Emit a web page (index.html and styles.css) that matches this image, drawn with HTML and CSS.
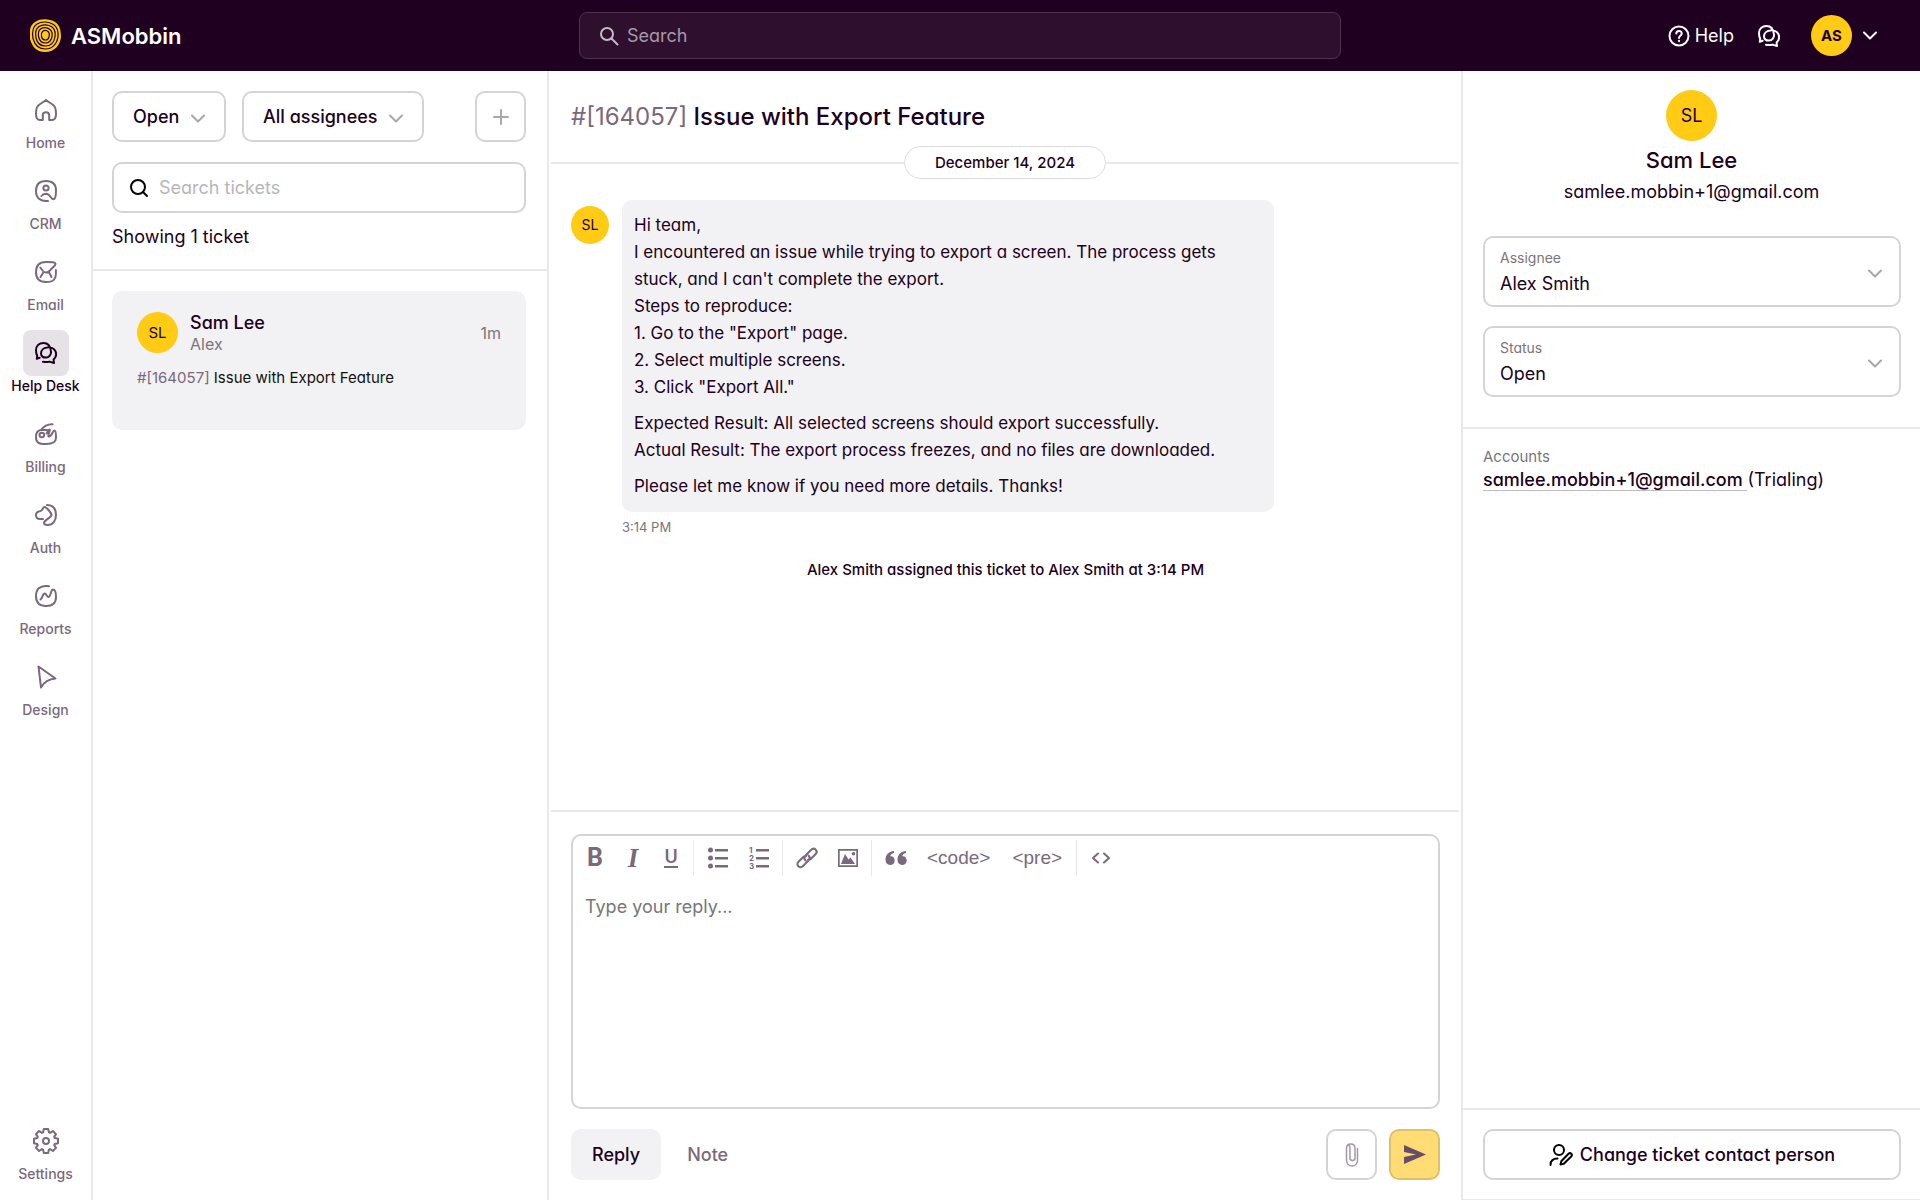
FILE: index.html
```html
<!DOCTYPE html>
<html lang="en">

<head>
  <title>ASMobbin - Help Desk</title>
  <meta charset="UTF-8">
  <meta name="viewport" content="width=device-width, initial-scale=1.0">
  <link rel="stylesheet" href="styles.css">
</head>

<body>

<!-- shared icons -->
<svg class="sprite" aria-hidden="true">
  <symbol id="chat" viewBox="0 0 22 22">
    <path d="M8 19.8C10.500 20.300 12.500 20.200 14.500 19.600L19 21L18.600 17.500C21.200 15 21.600 11.500 20.200 8.800C18.700 6.300 15 5 12 5.500C8.500 6 6 8.500 6 11.500C6 14.200 8.300 15.800 11 15.600C14.200 15.300 16.300 12.500 16 9.500C15.500 4.500 13 1 8.500 1C4 1 1 4 1 8.500C1 10.500 1.300 12.200 2.200 13.600L1.800 16.800L4.600 15.800"/>
  </symbol>
  <symbol id="chevron" viewBox="0 0 14 9">
    <path d="M1 1.500L7 7.500L13 1.500"/>
  </symbol>
</svg>

<header class="topbar">
  <a class="brand" href="#">
    <svg width="31" height="33" viewBox="0 0 31 33">
      <path fill="#ffc91a" d="M5 3C11-1 20 0 25 3C30 6 31 12 31 18C30 26 25 33 15 33C6 33 2 27 0 20C-1 12 0 6 5 3Z"/>
      <g fill="none" stroke="#200020" stroke-width="1.200">
        <path d="M7 5C12 2 19 2.500 23.500 5.500C28 8.500 28.500 13 28 18C27 25 22 30 15.500 30C8 30 4.500 25 3 19.500C2 13.500 2.500 8 7 5Z"/>
        <path d="M9 7.500C13 5 18.500 5.500 22 8C25.500 10.500 25.500 14 25 18C24 23.500 20.500 27 15.500 27C10 27 7 23.500 6 19C5 14.500 5.500 10 9 7.500Z"/>
        <path d="M10.500 10C14 8 17.500 8.500 20 10.500C22.500 12.500 22.500 15 22 18C21 22 19 24 15.500 24C12 24 9.500 21.500 8.800 18.500C8 15 8 12 10.500 10Z"/>
        <path d="M12.500 12.500C14.500 11 17 11.500 18.500 13C20 14.500 19.500 16 19 18C18.500 20 17.500 21 15.500 21C13.500 21 12 19.500 11.500 17.500C11 15.500 11 14 12.500 12.500Z"/>
      </g>
    </svg>
    ASMobbin
  </a>
  <form class="global-search">
    <svg class="line-icon" width="20" height="20" viewBox="0 0 20 20"><circle cx="8" cy="8" r="6"/><path d="M12.500 12.500L18.500 18.500"/></svg>
    <input type="search" placeholder="Search" aria-label="Search">
  </form>
  <div class="account">
    <a class="help" href="#">
      <svg class="line-icon" width="22" height="22" viewBox="0 0 22 22"><circle cx="11" cy="11" r="9.500"/><path d="M8.300 8.600C8.300 5 13.700 5 13.700 8.500C13.700 10.800 11 10.700 11 13"/><path d="M11 15.800V16.200"/></svg>
      Help
    </a>
    <button class="chat-btn" aria-label="Messages"><svg class="line-icon" width="22" height="22"><use href="#chat"/></svg></button>
    <button class="user-btn" aria-label="Account menu">
      <span class="avatar avatar-user">AS</span>
      <svg class="line-icon" width="14" height="9"><use href="#chevron"/></svg>
    </button>
  </div>
</header>

<div class="layout">

  <nav class="sidebar">
    <a href="#"><span class="nav-icon"><svg width="22" height="22" viewBox="0 0 22 22"><path d="M11 1C8.500 3.200 4.500 5 2.800 7C1.200 9 1 12 1 15C1 19 2.500 21 5 21H7.800V16.500C7.800 12.300 14.200 12.300 14.200 16.500V21H17C19.500 21 21 19 21 15C21 12 20.800 9 19.200 7C17.500 5 13.500 3.200 11 1Z"/></svg></span>Home</a>
    <a href="#"><span class="nav-icon"><svg width="22" height="22" viewBox="0 0 22 22"><circle cx="11" cy="8" r="2.600"/><path d="M13 21C5 21.500 1 18 1 11C1 4 4 1 11 1C18 1 21 4 21 10.500C21 15 20.500 19 18.500 19.300C16 19.500 15.500 14 11 13.800C9 13.800 7.500 14.600 6.500 16"/></svg></span>CRM</a>
    <a href="#"><span class="nav-icon"><svg width="22" height="22" viewBox="0 0 22 22"><path d="M20.900 9V13C20.900 19 18 21 11 21C4 21 1 18 1 11C1 4 4 1 11 1C17 1 20.500 1.200 20.500 3C20.500 4.700 17 7 15 9.500C12.500 12 9.500 12 7.500 9.500L5.300 6.500M5.500 16L8.500 11.300M16.500 16L13.800 11"/></svg></span>Email</a>
    <a class="active" href="#"><span class="nav-icon"><svg width="22" height="22"><use href="#chat"/></svg></span>Help Desk</a>
    <a href="#"><span class="nav-icon"><svg width="22" height="22" viewBox="0 0 22 22"><path d="M17.500 1.200C12 1 9 3 6 7C2.500 7.300 1 9 1 14C1 19.500 3.500 21 11 21C18.500 21 21 19 21 14.500C21 11 20.800 7.500 19.500 7.500C17.500 7.500 17 13.500 14 13.500C11.700 13.500 16 6.500 14.500 6.500C13 6.500 12.500 9 11.500 10.500M6 7H12"/><circle cx="6.800" cy="12" r="2.300"/></svg></span>Billing</a>
    <a href="#"><span class="nav-icon"><svg width="22" height="22" viewBox="0 0 22 22"><path d="M8 15H5C2.300 15 1 13.500 1 11.300C1 9 2.500 7.500 5 7.300C8 7 7.500 3 9.500 3C11.500 3 16.500 9 16.500 11C16.500 13.500 9 16 9 19C9 20.500 10.500 21 12.500 21C18 21 21 16.500 21 11C21 5 18 1 12 1"/></svg></span>Auth</a>
    <a href="#"><span class="nav-icon"><svg width="22" height="22" viewBox="0 0 22 22"><path d="M14 1.200C5 0 1 4 1 11C1 18 4 21 11 21C18 21 21 18 21 12C21 8 20.500 4.500 18 4.500C15.500 4.500 16 12 13.500 12C11.700 12 11.700 8.500 9.500 8.500C7.500 8.500 8 13 5.500 14.500"/></svg></span>Reports</a>
    <a href="#"><span class="nav-icon"><svg width="22" height="24" viewBox="0 0 22 24"><path d="M3.500 1.500L20.500 13.500C14 14 9 17 6 22.500Z"/></svg></span>Design</a>
    <a class="settings" href="#"><span class="nav-icon"><svg width="26" height="26" viewBox="0 0 26 26"><path d="M10.800 1H15.200L15.900 4.300L17.100 4.800L19.900 3L23 6.100L21.200 8.900L21.700 10.100L25 10.800V15.200L21.700 15.900L21.200 17.100L23 19.900L19.900 23L17.100 21.200L15.900 21.700L15.200 25H10.800L10.100 21.700L8.900 21.200L6.100 23L3 19.900L4.800 17.100L4.300 15.900L1 15.200V10.800L4.300 10.100L4.800 8.900L3 6.100L6.100 3L8.900 4.800L10.100 4.300Z"/><circle cx="13" cy="13" r="3"/></svg></span>Settings</a>
  </nav>

  <section class="tickets">
    <div class="filters">
      <div class="filters-row">
        <div class="dropdown">
          <select aria-label="Ticket status"><option>Open</option></select>
          <svg class="line-icon" width="14" height="9"><use href="#chevron"/></svg>
        </div>
        <div class="dropdown">
          <select aria-label="Ticket assignee"><option>All assignees</option></select>
          <svg class="line-icon" width="14" height="9"><use href="#chevron"/></svg>
        </div>
        <button class="square-btn add-btn" aria-label="New ticket"><svg class="line-icon" width="16" height="16" viewBox="0 0 16 16"><path d="M8 1V15M1 8H15"/></svg></button>
      </div>
      <div class="ticket-search">
        <svg class="line-icon" width="20" height="20" viewBox="0 0 20 20"><circle cx="9" cy="9" r="7"/><path d="M14 14L18 18"/></svg>
        <input type="search" placeholder="Search tickets" aria-label="Search tickets">
      </div>
      <p class="count">Showing 1 ticket</p>
    </div>
    <a class="ticket" href="#">
      <div class="ticket-head">
        <span class="avatar avatar-ticket">SL</span>
        <div class="ticket-who">
          <div class="ticket-name">Sam Lee</div>
          <div class="ticket-owner">Alex</div>
        </div>
        <span class="ticket-age">1m</span>
      </div>
      <div class="ticket-subject"><span>#[164057]</span> Issue with Export Feature</div>
    </a>
  </section>

  <main class="conversation">
    <h1><span>#[164057]</span> Issue with Export Feature</h1>
    <div class="date-line"><span>December 14, 2024</span></div>

    <div class="thread">
      <div class="message">
        <span class="avatar avatar-message">SL</span>
        <div class="message-body">
          <div class="bubble">
            <p>Hi team,<br>
              I encountered an issue while trying to export a screen. The process gets<br>
              stuck, and I can't complete the export.<br>
              Steps to reproduce:<br>
              1. Go to the "Export" page.<br>
              2. Select multiple screens.<br>
              3. Click "Export All."</p>
            <p>Expected Result: All selected screens should export successfully.<br>
              Actual Result: The export process freezes, and no files are downloaded.</p>
            <p>Please let me know if you need more details. Thanks!</p>
          </div>
          <time>3:14 PM</time>
        </div>
      </div>
      <p class="event">Alex Smith assigned this ticket to Alex Smith at 3:14 PM</p>
    </div>

    <form class="reply">
      <div class="editor">
        <div class="toolbar">
          <div class="tools">
            <button type="button" class="tool-b" aria-label="Bold">B</button>
            <button type="button" class="tool-i" aria-label="Italic">I</button>
            <button type="button" class="tool-u" aria-label="Underline"><span>U</span></button>
          </div>
          <div class="tools">
            <button type="button" aria-label="Bulleted list"><svg width="22" height="22" viewBox="0 0 22 22"><circle cx="3.500" cy="3" r="2.500"/><circle cx="3.500" cy="11" r="2.500"/><circle cx="3.500" cy="19" r="2.500"/><path d="M8 2h13v2.500H8zM8 10h13v2.500H8zM8 18h13v2.500H8z"/></svg></button>
            <button type="button" aria-label="Numbered list"><svg width="22" height="22" viewBox="0 0 22 22"><text x="1" y="6">1</text><text x="1" y="14">2</text><text x="1" y="22">3</text><path d="M8 2h13v2.500H8zM8 10h13v2.500H8zM8 18h13v2.500H8z"/></svg></button>
          </div>
          <div class="tools">
            <button type="button" aria-label="Link"><svg class="line-icon" width="22" height="22" viewBox="0 0 22 22"><path d="M9.500 13.500C8 12 8 10 9.500 8.500L15 3C16.500 1.500 18.500 1.500 19.700 2.700C21 4 20.800 6 19.500 7.300L15 11.800C14 12.800 13 13 12 12.800M12.500 8.500C14 10 14 12 12.500 13.500L7 19C5.500 20.500 3.500 20.500 2.300 19.300C1 18 1.200 16 2.500 14.700L7 10.200C8 9.200 9 9 10 9.200"/></svg></button>
            <button type="button" aria-label="Image"><svg width="22" height="20" viewBox="0 0 22 20"><path fill-rule="evenodd" d="M1 1H21V19H1ZM2.700 2.700V17.300H19.300V2.700Z"/><path d="M4 16L8 6L11.500 11.500L13.500 9.500L18 16Z"/><circle cx="16.500" cy="5.700" r="1.800"/></svg></button>
          </div>
          <div class="tools">
            <button type="button" aria-label="Quote"><svg width="22" height="16" viewBox="0 0 22 16"><path d="M9 1V3C6.500 3.500 5.500 5 5.300 6.300C8 6 9.700 8 9.700 10.500C9.700 13 7.800 15 5.200 15C2.300 15 .5 13 .5 9.800C.5 5 3.500 1.500 9 1Z"/><path d="M21 1V3C18.500 3.500 17.500 5 17.300 6.300C20 6 21.700 8 21.700 10.500C21.700 13 19.800 15 17.200 15C14.300 15 12.500 13 12.500 9.800C12.500 5 15.500 1.500 21 1Z"/></svg></button>
            <button type="button" class="tool-text">&lt;code&gt;</button>
            <button type="button" class="tool-text">&lt;pre&gt;</button>
          </div>
          <div class="tools">
            <button type="button" aria-label="View source"><svg class="line-icon" width="20" height="12" viewBox="0 0 20 12"><path d="M7 1.500L2 6L7 10.500M13 1.500L18 6L13 10.500"/></svg></button>
          </div>
        </div>
        <textarea placeholder="Type your reply..." aria-label="Reply"></textarea>
      </div>
      <div class="reply-actions">
        <button type="button" class="tab tab-active">Reply</button>
        <button type="button" class="tab">Note</button>
        <button type="button" class="square-btn attach-btn" aria-label="Attach file"><svg class="line-icon" width="14" height="26" viewBox="0 0 14 26"><path d="M10 7V16.500C10 19 5 19 5 16.500V6C5 .8 1.500 3 1.500 6V18C1.500 26 12.500 26 12.500 18V6.500M1.500 6C1.500 .5 10 .5 10 6V7"/></svg></button>
        <button type="submit" class="square-btn send-btn" aria-label="Send"><svg width="22" height="20" viewBox="0 0 22 20"><path d="M0 0L22 9.500L0 19V12L12 9.500L0 7Z"/></svg></button>
      </div>
    </form>
  </main>

  <aside class="details">
    <div class="contact">
      <span class="avatar avatar-contact">SL</span>
      <h2>Sam Lee</h2>
      <p>samlee.mobbin+1@gmail.com</p>
    </div>
    <div class="fields">
      <div class="field">
        <label for="assignee">Assignee</label>
        <select id="assignee"><option>Alex Smith</option></select>
        <svg class="line-icon" width="14" height="9"><use href="#chevron"/></svg>
      </div>
      <div class="field">
        <label for="status">Status</label>
        <select id="status"><option>Open</option></select>
        <svg class="line-icon" width="14" height="9"><use href="#chevron"/></svg>
      </div>
    </div>
    <div class="accounts">
      <h3>Accounts</h3>
      <p><a href="#">samlee.mobbin+1@gmail.com&nbsp;</a>(Trialing)</p>
    </div>
    <div class="details-foot">
      <button class="change-btn">
        <svg class="line-icon" width="24" height="22" viewBox="0 0 24 22"><circle cx="10" cy="6" r="5"/><path d="M1.500 21C1.500 17 4 14.500 8.500 14.500M11.500 20.500L12.300 17.300L19.500 9.800C21.500 8 24 10.500 22.200 12.500L14.800 19.800Z"/></svg>
        Change ticket contact person
      </button>
    </div>
  </aside>

</div>

</body>

</html>
```
FILE: styles.css
```css
* {
  box-sizing: border-box;
}

body {
  display: flex;
  flex-direction: column;
  min-height: 100vh;
  margin: 0;
  background: #fff;
  color: #200020;
  font-family: Inter, "Liberation Sans", sans-serif;
  font-feature-settings: "cv11";
  font-size: 18px;
  line-height: 24px;
}

h1, h2, h3, p {
  margin: 0;
  font-weight: 400;
}

a {
  color: inherit;
  text-decoration: none;
}

button, input, select, textarea {
  font: inherit;
  font-feature-settings: inherit;
  color: inherit;
  background: none;
  border: none;
  padding: 0;
}

button {
  cursor: pointer;
}

input, select, textarea {
  appearance: none;
  outline: none;
}

svg {
  flex-shrink: 0;
}

.sprite {
  display: none;
}

.line-icon, .nav-icon svg {
  fill: none;
  stroke: currentColor;
  stroke-width: 2;
  stroke-linecap: round;
  stroke-linejoin: round;
}

.avatar {
  display: flex;
  align-items: center;
  justify-content: center;
  flex-shrink: 0;
  border-radius: 50%;
  background: #ffcb14;
}

/* top bar */
.topbar {
  display: grid;
  grid-template-columns: 1fr 762px 1fr;
  align-items: center;
  height: 71px;
  padding: 0 30px;
  background: #200020;
  color: #fff;
}

.brand {
  display: flex;
  align-items: center;
  gap: 10px;
  font-size: 22px;
  font-weight: 600;
}

.global-search {
  display: flex;
  align-items: center;
  gap: 8px;
  height: 47px;
  padding: 0 19px;
  border: 1px solid #4d334d;
  border-radius: 8px;
  background: #2e102e;
  color: #c4b9c4;
}

.global-search input {
  flex: 1;
}

.global-search input::placeholder {
  color: #a698a6;
}

.account {
  display: flex;
  align-items: center;
  justify-content: flex-end;
  margin-right: 13px;
}

.help {
  display: flex;
  align-items: center;
  gap: 5px;
  margin-right: 24px;
}

.chat-btn {
  display: flex;
  margin-right: 31px;
}

.user-btn {
  display: flex;
  align-items: center;
  gap: 11px;
}

.avatar-user {
  width: 41px;
  height: 41px;
  color: #200020;
  font-size: 15px;
  font-weight: 700;
}

.layout {
  display: grid;
  grid-template-columns: 93px 456px 1fr 459px;
  flex: 1;
}

/* navigation */
.sidebar {
  display: flex;
  flex-direction: column;
  gap: 15px;
  padding: 16px 0;
  border-right: 2px solid #e9e8ea;
  color: #7a687c;
  font-size: 14px;
  font-weight: 500;
  line-height: 20px;
  text-align: center;
}

.sidebar a {
  display: flex;
  flex-direction: column;
  align-items: center;
}

.nav-icon {
  display: flex;
  align-items: center;
  justify-content: center;
  width: 46px;
  height: 46px;
  border-radius: 8px;
}

.sidebar .active {
  color: #200020;
}

.active .nav-icon {
  background: #e6e3e7;
}

.sidebar .settings {
  margin-top: auto;
}

/* ticket list */
.tickets {
  border-right: 2px solid #e9e8ea;
}

.filters {
  padding: 20px 21px 20px 19px;
  border-bottom: 2px solid #e9e8ea;
}

.filters-row {
  display: flex;
  gap: 16px;
  margin-bottom: 20px;
}

.dropdown {
  position: relative;
}

.dropdown select {
  height: 51px;
  padding: 0 44px 0 19px;
  border: 2px solid #d6d3d7;
  border-radius: 10px;
  font-weight: 500;
}

.dropdown svg, .field svg {
  position: absolute;
  top: 50%;
  right: 21px;
  margin-top: -3px;
  color: #aaa5ac;
  pointer-events: none;
}

.square-btn {
  display: flex;
  align-items: center;
  justify-content: center;
  width: 51px;
  height: 51px;
  border: 2px solid #d6d3d7;
  border-radius: 10px;
}

.add-btn {
  margin-left: auto;
  color: #aaa5ac;
}

.ticket-search {
  display: flex;
  align-items: center;
  gap: 10px;
  height: 51px;
  padding: 0 15px;
  border: 2px solid #d6d3d7;
  border-radius: 10px;
  margin-bottom: 12px;
}

.ticket-search svg {
  color: #000;
}

.ticket-search input {
  flex: 1;
}

.ticket-search input::placeholder {
  color: #b8b5ba;
}

.ticket {
  display: block;
  min-height: 139px;
  margin: 20px 21px 20px 19px;
  padding: 20px 25px;
  border-radius: 10px;
  background: #f2f1f3;
}

.ticket-head {
  display: flex;
  align-items: center;
  gap: 12px;
}

.avatar-ticket {
  width: 41px;
  height: 41px;
  font-size: 15px;
}

.ticket-who {
  flex: 1;
}

.ticket-name {
  font-weight: 500;
  line-height: 23px;
}

.ticket-owner, .ticket-age {
  color: #7a757d;
  font-size: 16px;
  line-height: 20px;
}

.ticket-subject {
  margin-top: 12px;
  font-size: 15px;
  color: #111;
}

.ticket-subject span, h1 span {
  color: #7a687c;
}

/* conversation */
.conversation {
  display: flex;
  flex-direction: column;
}

h1 {
  padding: 30px 22px 13px;
  font-size: 24px;
  font-weight: 500;
  line-height: 32px;
}

h1 span {
  font-weight: 400;
}

.date-line {
  display: flex;
  align-items: center;
  margin: 0 2px;
  font-size: 15px;
  font-weight: 500;
}

.date-line::before, .date-line::after {
  content: "";
  flex: 1;
  height: 2px;
  background: #e9e8ea;
}

.date-line span {
  padding: 4px 30px 3px;
  border: 1px solid #dddbde;
  border-radius: 17px;
}

.thread {
  flex: 1;
  padding: 21px 21px 21px 22px;
}

.message {
  display: flex;
  gap: 13px;
}

.avatar-message {
  width: 38px;
  height: 38px;
  margin-top: 6px;
  font-size: 14px;
}

.message-body {
  flex: 1;
  max-width: 652px;
}

.bubble {
  padding: 12px;
  border-radius: 10px;
  background: #f2f1f3;
  font-size: 17px;
  line-height: 27px;
}

.bubble p + p {
  margin-top: 9px;
}

.message time {
  display: block;
  margin-top: 3px;
  color: #7a757d;
  font-size: 13px;
}

.event {
  margin-top: 19px;
  font-size: 15px;
  font-weight: 500;
  text-align: center;
}

.reply {
  margin: 0 2px;
  padding: 22px 19px 20px 20px;
  border-top: 2px solid #e9e8ea;
}

.editor {
  border: 2px solid #d6d3d7;
  border-radius: 10px;
}

.toolbar {
  display: flex;
  padding-top: 4px;
  color: #7a687c;
}

.tools {
  display: flex;
  align-items: center;
  height: 36px;
  padding: 0 3px;
  border-right: 1px solid #e9e8ea;
}

.tools:last-child {
  border: none;
}

.tools button {
  display: flex;
  align-items: center;
  justify-content: center;
  width: 41px;
  height: 36px;
}

.tools svg {
  overflow: visible;
  fill: currentColor;
}

.tools .line-icon {
  fill: none;
}

.tools text {
  font-size: 8px;
  font-weight: 700;
}

.toolbar .tool-b {
  width: 38px;
  font-family: Roboto, sans-serif;
  font-size: 25px;
  font-weight: 700;
}

.toolbar .tool-i {
  width: 38px;
  font-family: "Liberation Serif", serif;
  font-size: 27px;
  font-style: italic;
  font-weight: 700;
}

.toolbar .tool-u {
  width: 38px;
}

.tool-u span {
  border-bottom: 2px solid;
  font-weight: 600;
  line-height: 18px;
}

.toolbar .tool-text {
  width: auto;
  padding: 0 11px;
  font-family: "Liberation Sans", sans-serif;
  font-size: 19px;
}

.editor textarea {
  display: block;
  width: 100%;
  height: 231px;
  padding: 19px 12px;
  resize: none;
}

.editor textarea::placeholder {
  color: #777;
}

.reply-actions {
  display: flex;
  gap: 12px;
  margin-top: 20px;
}

.tab {
  height: 51px;
  padding: 0 21px;
  border-radius: 10px;
  color: #7a687c;
  font-weight: 500;
}

.tab + .tab {
  padding: 0 14px;
}

.tab-active {
  background: #f2f1f3;
  color: #200020;
}

.attach-btn {
  margin-left: auto;
  color: #a09aa2;
}

.attach-btn .line-icon {
  stroke-width: 1.5;
}

.send-btn {
  border-color: #dfc06a;
  background: #ffdc74;
}

.send-btn svg {
  fill: #664e66;
}

/* ticket details */
.details {
  display: flex;
  flex-direction: column;
  border-left: 2px solid #e9e8ea;
}

.contact {
  display: flex;
  flex-direction: column;
  align-items: center;
  padding-top: 19px;
}

.avatar-contact {
  width: 51px;
  height: 51px;
}

.contact h2 {
  margin: 5px 0 6px;
  font-size: 22px;
  font-weight: 500;
  line-height: 28px;
}

.fields {
  display: flex;
  flex-direction: column;
  gap: 19px;
  padding: 32px 19px 30px 20px;
  border-bottom: 2px solid #e9e8ea;
}

.field {
  position: relative;
  height: 71px;
  border: 2px solid #d6d3d7;
  border-radius: 10px;
}

.field label {
  display: block;
  padding: 10px 15px 0;
  margin-bottom: -30px;
  color: #7a757d;
  font-size: 14px;
  line-height: 20px;
}

.field select {
  width: 100%;
  height: 67px;
  padding: 24px 15px 0;
}

.field svg {
  right: 17px;
}

.accounts {
  flex: 1;
  padding: 18px 20px;
}

.accounts h3 {
  margin-bottom: 1px;
  color: #7a757d;
  font-size: 15px;
  line-height: 20px;
}

.accounts a {
  border-bottom: 1px solid #c4b9c4;
  font-weight: 500;
}

.details-foot {
  padding: 19px 19px 19px 20px;
  border-top: 2px solid #e9e8ea;
  border-bottom: 1px solid #e9e8ea;
}

.change-btn {
  display: flex;
  align-items: center;
  justify-content: center;
  gap: 7px;
  width: 100%;
  height: 51px;
  border: 2px solid #d6d3d7;
  border-radius: 10px;
  font-weight: 500;
}

.change-btn svg {
  color: #000;
}
```
